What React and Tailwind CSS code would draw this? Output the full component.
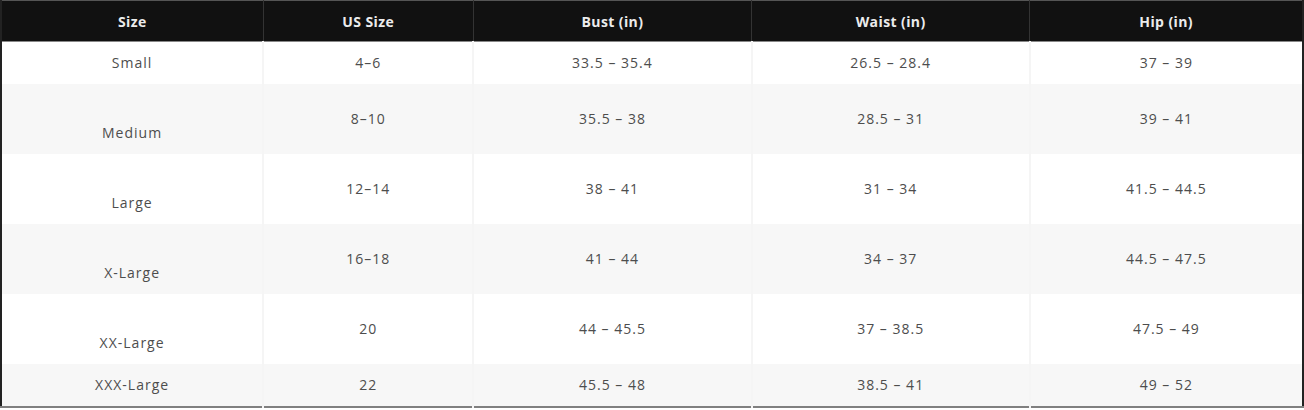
import React from 'react';

const rows = [
  { size: 'Small', us: '4–6', bust: '33.5 – 35.4', waist: '26.5 – 28.4', hip: '37 – 39', gap: false },
  { size: 'Medium', us: '8–10', bust: '35.5 – 38', waist: '28.5 – 31', hip: '39 – 41', gap: true },
  { size: 'Large', us: '12–14', bust: '38 – 41', waist: '31 – 34', hip: '41.5 – 44.5', gap: true },
  { size: 'X-Large', us: '16–18', bust: '41 – 44', waist: '34 – 37', hip: '44.5 – 47.5', gap: true },
  { size: 'XX-Large', us: '20', bust: '44 – 45.5', waist: '37 – 38.5', hip: '47.5 – 49', gap: true },
  { size: 'XXX-Large', us: '22', bust: '45.5 – 48', waist: '38.5 – 41', hip: '49 – 52', gap: false },
];

const heads = ['Size', 'US Size', 'Bust (in)', 'Waist (in)', 'Hip (in)'];
const widths = ['w-[262px]', 'w-[210px]', 'w-[278px]', 'w-[278px]', 'w-[273px]'];

const App = () => {
  return (
    <div className="w-[1304px] h-[410px] bg-white font-['Open_Sans',sans-serif]">
      <table className="w-[1304px] border-collapse table-fixed border-l-2 border-l-[#222] border-r-2 border-r-[#222] border-b-2 border-b-[#808080]">
        <colgroup>
          {widths.map((w, i) => (
            <col key={i} className={w} />
          ))}
        </colgroup>
        <thead>
          <tr className="bg-[#111] border-t border-t-[#555] border-b border-b-[#888]">
            {heads.map((h, i) => (
              <th
                key={h}
                className={`h-[41px] p-0 text-center text-[14px] font-bold text-[#ececec] tracking-[0.4px] ${i < 4 ? 'border-r border-r-[#333]' : ''}`}
              >
                {h}
              </th>
            ))}
          </tr>
        </thead>
        <tbody>
          {rows.map((r, ri) => (
            <tr key={r.size} className={ri % 2 === 1 ? 'bg-[#f7f7f7]' : 'bg-white'}>
              {[r.size, r.us, r.bust, r.waist, r.hip].map((v, i) => (
                <td
                  key={i}
                  className={`py-[7px] px-0 text-center align-middle text-[14px] leading-[28px] text-[#4d4d4d] tracking-[1px] ${i < 4 ? 'border-r-2 border-r-[#f5f5f5]' : ''}`}
                >
                  {i === 0 && r.gap ? (
                    <>
                      <br />
                      {v}
                    </>
                  ) : (
                    v
                  )}
                </td>
              ))}
            </tr>
          ))}
        </tbody>
      </table>
    </div>
  );
};

export default App;
